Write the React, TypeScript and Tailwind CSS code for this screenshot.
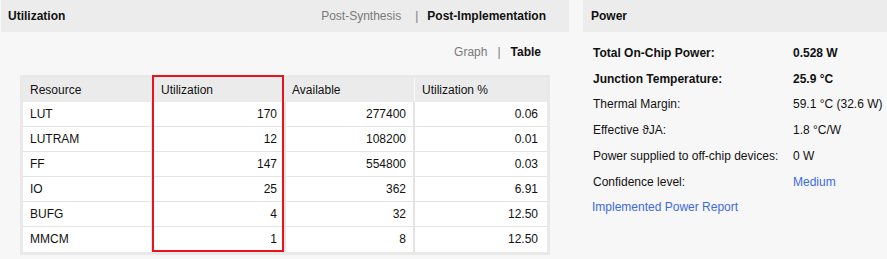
// Utilization / Power summary panels
import React from 'react';

type Row = { name: string; used: string; avail: string; pct: string };

const rows: Row[] = [
  { name: 'LUT', used: '170', avail: '277400', pct: '0.06' },
  { name: 'LUTRAM', used: '12', avail: '108200', pct: '0.01' },
  { name: 'FF', used: '147', avail: '554800', pct: '0.03' },
  { name: 'IO', used: '25', avail: '362', pct: '6.91' },
  { name: 'BUFG', used: '4', avail: '32', pct: '12.50' },
  { name: 'MMCM', used: '1', avail: '8', pct: '12.50' },
];

const power = [
  { label: 'Total On-Chip Power:', value: '0.528 W', bold: true, h: 'h-[27px] leading-[26px]' },
  { label: 'Junction Temperature:', value: '25.9 °C', bold: true, h: 'h-[24px] leading-[24px]' },
  { label: 'Thermal Margin:', value: '59.1 °C (32.6 W)', bold: false, h: 'h-[26px] leading-[26px]' },
  { label: 'Effective ϑJA:', value: '1.8 °C/W', bold: false, h: 'h-[26px] leading-[26px]' },
  { label: 'Power supplied to off-chip devices:', value: '0 W', bold: false, h: 'h-[26px] leading-[26px]' },
  { label: 'Confidence level:', value: 'Medium', bold: false, link: true, h: 'h-[26px] leading-[26px]' },
];

const App: React.FC = () => {
  return (
    <div className="flex w-[887px] h-[259px] bg-[#f7f7f7] font-['Liberation_Sans',Arial,sans-serif] text-[12px] text-[#111] overflow-hidden">
      {/* Utilization panel */}
      <div className="w-[568px] ml-px flex flex-col">
        <div className="h-8 bg-[#ececec] flex items-center justify-between pl-[7px] pr-[23px]">
          <span className="font-bold">Utilization</span>
          <div className="flex items-center">
            <span className="text-[#7a7a7a]">Post-Synthesis</span>
            <span className="text-[#7a7a7a] ml-[14px] mr-[9px]">|</span>
            <span className="font-bold">Post-Implementation</span>
          </div>
        </div>

        <div className="h-[43px] pt-[13px] leading-[14px] flex justify-end pr-[28px]">
          <span className="text-[#7a7a7a]">Graph</span>
          <span className="text-[#7a7a7a] mx-[10px]">|</span>
          <span className="font-bold">Table</span>
        </div>

        <div className="relative ml-[19px] w-[530px] bg-[#e9e9e9] pt-[3px] px-[3px] pb-[3px]">
          <div className="grid grid-cols-[129px_132px_131px_132px] h-[24px] leading-[24px] bg-[#ebebeb]">
            <div className="pl-[7px]">Resource</div>
            <div className="pl-[9px]">Utilization</div>
            <div className="pl-[8px] border-r border-[#f8f8f8]">Available</div>
            <div className="pl-[7px]">Utilization %</div>
          </div>
          {rows.map((r, i) => (
            <div
              key={r.name}
              className={`grid grid-cols-[129px_132px_131px_132px] h-[25px] leading-[24px] bg-white ${
                i < rows.length - 1 ? 'border-b border-[#e4e4e4]' : ''
              }`}
            >
              <div className="pl-[7px] border-r border-[#e4e4e4]">{r.name}</div>
              <div className="text-right pr-[7px]">{r.used}</div>
              <div className="text-right pr-[7px] border-x-2 border-[#e4e4e4]">{r.avail}</div>
              <div className="text-right pr-[9px]">{r.pct}</div>
            </div>
          ))}
          <div className="absolute left-[132px] top-0 w-[132px] h-[177px] border-2 border-[#e8141c] pointer-events-none" />
        </div>
      </div>

      {/* Power panel */}
      <div className="ml-[14px] flex-1 flex flex-col">
        <div className="h-8 bg-[#ececec] flex items-center pl-[8px]">
          <span className="font-bold">Power</span>
        </div>
        <div className="pl-[10px] pt-[8px]">
          {power.map((p) => (
            <div key={p.label} className={`flex ${p.h}`}>
              <div className={`w-[200px] ${p.bold ? 'font-bold' : ''}`}>{p.label}</div>
              <div className={`${p.bold ? 'font-bold' : ''} ${p.link ? 'text-[#3d6ae0]' : ''}`}>
                {p.value}
              </div>
            </div>
          ))}
          <div className="h-[26px] leading-[24px] -ml-px text-[#3d6ae0]">Implemented Power Report</div>
        </div>
      </div>
    </div>
  );
};

export default App;
